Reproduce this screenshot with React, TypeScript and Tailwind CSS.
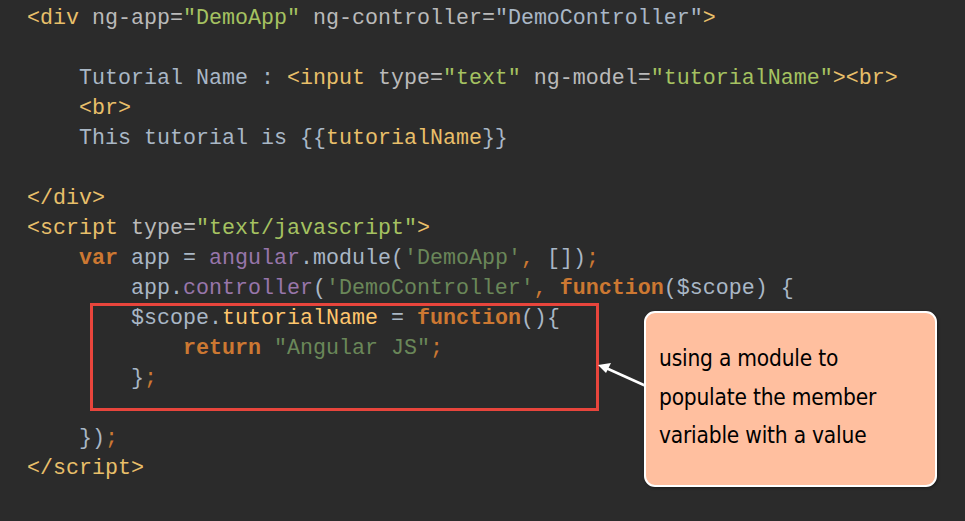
const tag = "text-[#e8bf6a]"
const attr = "text-[#bababa]"
const val = "text-[#a5c261]"
const txt = "text-[#a9b7c6]"
const kw = "text-[#cc7832] font-bold"
const punc = "text-[#cc7832]"
const purple = "text-[#9876aa]"
const str = "text-[#6a8759]"
const field = "text-[#ffc66d]"

const Line = ({ indent = 0, children }: { indent?: number; children?: React.ReactNode }) => (
	<div className="h-[30px] whitespace-pre">
		{" ".repeat(indent)}
		{children}
	</div>
)

export default function App() {
	return (
		<div className="relative w-[965px] h-[521px] overflow-hidden bg-[#2b2b2b]">
			<pre
				className="pt-[4px] pl-[27px] text-[21.67px] leading-[30px]"
				style={{ fontFamily: '"Liberation Mono", "Courier New", monospace' }}>
				<Line>
					<span className={tag}>&lt;div </span>
					<span className={attr}>ng-app=</span>
					<span className={val}>"DemoApp"</span>
					<span className={attr}> ng-controller=</span>
					<span className={txt}>"DemoController"</span>
					<span className={tag}>&gt;</span>
				</Line>
				<Line />
				<Line indent={4}>
					<span className={txt}>Tutorial Name : </span>
					<span className={tag}>&lt;input </span>
					<span className={attr}>type=</span>
					<span className={val}>"text"</span>
					<span className={attr}> ng-model=</span>
					<span className={val}>"tutorialName"</span>
					<span className={tag}>&gt;&lt;br&gt;</span>
				</Line>
				<Line indent={4}>
					<span className={tag}>&lt;br&gt;</span>
				</Line>
				<Line indent={4}>
					<span className={txt}>This tutorial is {"{{"}</span>
					<span className={tag}>tutorialName</span>
					<span className={txt}>{"}}"}</span>
				</Line>
				<Line />
				<Line>
					<span className={tag}>&lt;/div&gt;</span>
				</Line>
				<Line>
					<span className={tag}>&lt;script </span>
					<span className={attr}>type=</span>
					<span className={val}>"text/javascript"</span>
					<span className={tag}>&gt;</span>
				</Line>
				<Line indent={4}>
					<span className={kw}>var</span>
					<span className={txt}> app = </span>
					<span className={purple}>angular</span>
					<span className={txt}>.module(</span>
					<span className={str}>'DemoApp'</span>
					<span className={punc}>, </span>
					<span className={txt}>[])</span>
					<span className={punc}>;</span>
				</Line>
				<Line indent={8}>
					<span className={txt}>app.</span>
					<span className={purple}>controller</span>
					<span className={txt}>(</span>
					<span className={str}>'DemoController'</span>
					<span className={punc}>, </span>
					<span className={kw}>function</span>
					<span className={txt}>($scope) {"{"}</span>
				</Line>
				<Line indent={8}>
					<span className={txt}>$scope.</span>
					<span className={field}>tutorialName</span>
					<span className={txt}> = </span>
					<span className={kw}>function</span>
					<span className={txt}>(){"{"}</span>
				</Line>
				<Line indent={12}>
					<span className={kw}>return</span>
					<span className={str}> "Angular JS"</span>
					<span className={punc}>;</span>
				</Line>
				<Line indent={8}>
					<span className={txt}>{"}"}</span>
					<span className={punc}>;</span>
				</Line>
				<Line />
				<Line indent={4}>
					<span className={txt}>{"})"}</span>
					<span className={punc}>;</span>
				</Line>
				<Line>
					<span className={tag}>&lt;/script&gt;</span>
				</Line>
			</pre>

			{/* highlight box */}
			<div className="absolute left-[90px] top-[303px] w-[509px] h-[108px] border-[3px] border-[#e8453c]" />

			{/* arrow */}
			<svg className="absolute left-0 top-0" width="965" height="521">
				<line x1="646" y1="386" x2="606" y2="368" stroke="white" strokeWidth="2.5" />
				<polygon points="598,365 611,363 606,373" fill="white" />
			</svg>

			{/* callout */}
			<div className="absolute left-[644px] top-[311px] w-[293px] h-[176px] rounded-[11px] border-2 border-white bg-[#ffbf9f] pl-[13px] pt-[26px] shadow-[1px_1px_3px_rgba(0,0,0,0.4)]">
				<p
					className="text-[22.5px] leading-[38.5px] text-black tracking-[-0.2px]"
					style={{ fontFamily: '"Liberation Sans Narrow", "DejaVu Sans Condensed", sans-serif' }}>
					using a module to
					<br />
					populate the member
					<br />
					variable with a value
				</p>
			</div>
		</div>
	)
}
